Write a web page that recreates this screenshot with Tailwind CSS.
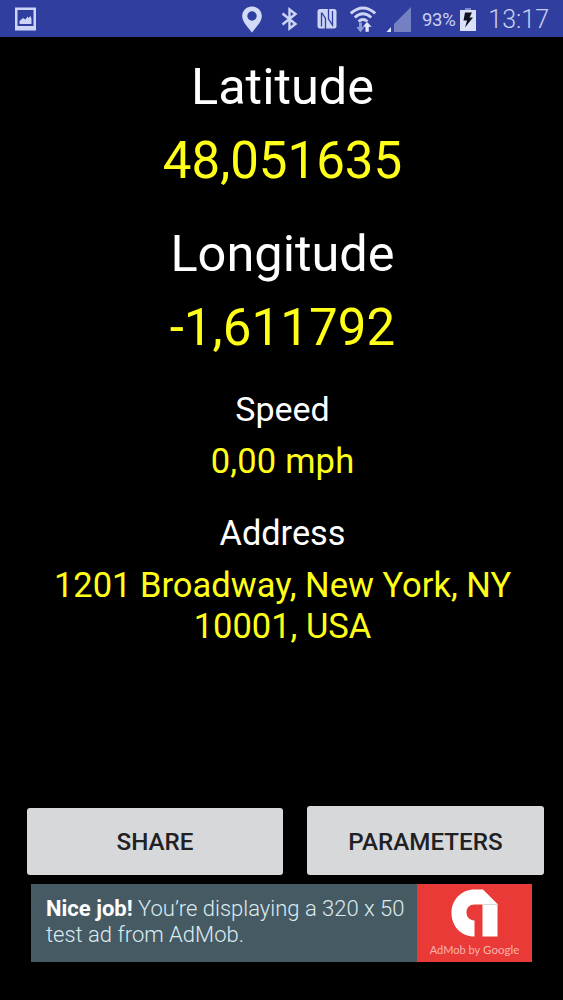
<!DOCTYPE html>
<html lang="en">
<head>
    <meta charset="UTF-8">
    <meta name="viewport" content="width=device-width, initial-scale=1.0">
    <title>GPS Coordinates</title>
    <script src="https://cdn.jsdelivr.net/npm/@tailwindcss/browser@4"></script>
</head>
<body class="bg-black">
    <div class="w-[563px] h-[1000px] flex flex-col overflow-hidden bg-black font-['Roboto',sans-serif]">

        <!-- Status bar -->
        <header class="h-[37px] shrink-0 bg-[#303f9f] flex items-center pl-[15px] pr-[14px] pt-px text-[#c9d0f0]">
            <svg class="w-[21px] h-[24px]" viewBox="0 0 21 24">
                <path fill="#cdd4f8" fill-rule="evenodd" d="M0 0.500H21V23.500H0ZM2.500 3V19H18.500V3Z"/>
                <path fill="#cdd4f8" d="M4.500 17V14L8 11L10.500 12.500L12.500 9.500L13.500 11L15.500 9L16.500 12V17Z"/>
            </svg>
            <svg class="w-[20px] h-[27px] ml-[206px]" viewBox="0 0 20 27">
                <path fill="#d3daf8" fill-rule="evenodd" d="M10 0.500C4.500 0.500 0.200 4.700 0.200 10C0.200 16 6 21 10 26.500C14 21 19.800 16 19.800 10C19.800 4.700 15.500 0.500 10 0.500ZM10 5.300A4.700 4.700 0 1 1 10 14.700A4.700 4.700 0 1 1 10 5.300Z"/>
            </svg>
            <svg class="w-[17px] h-[24px] ml-[19px]" viewBox="0 0 17 24">
                <path fill="none" stroke="#cdd4f6" stroke-width="2.400" d="M1.500 6.500L14.500 17L8.500 21.500V2.500L14.500 7L1.500 17.500"/>
            </svg>
            <svg class="w-[20px] h-[20px] ml-[19px]" viewBox="0 0 20 20">
                <rect width="19" height="19.500" x="0.500" fill="#cdd4f6" rx="2.500"/>
                <path fill="none" stroke="#303f9f" stroke-width="1.300" d="M4.500 17.500V3.500M8.500 20V9.500L5 4M15.500 2V16L11.500 10V0"/>
            </svg>
            <svg class="w-[26px] h-[27px] ml-[13px]" viewBox="0 0 26 27">
                <g fill="none" stroke="#cdd4f6" stroke-width="2.900">
                    <path d="M0.800 7.300Q13 -3.500 25.200 7.300"/>
                    <path d="M4.800 11.500Q13 4.200 21.200 11.500"/>
                    <path d="M8.500 15.500Q13 11.500 17.500 15.500"/>
                </g>
                <path fill="#8f9bd3" d="M9 16.500H12V21H14.500L10.500 26.500L6.500 21H9Z"/>
                <path fill="#e3e8ff" stroke="#303f9f" stroke-width="0.500" d="M17 15.500L22 21H19V26H15.200V21H12.500Z"/>
            </svg>
            <svg class="w-[25px] h-[25px] ml-[10px]" viewBox="0 0 25 25">
                <path fill="#7380c2" d="M25 0V25H8V17Z"/>
                <path fill="#dfe5ff" d="M5 20V25H0.500Z"/>
            </svg>
            <span class="ml-[11px] w-[34px] pt-0.5 text-[18.500px] leading-6 tracking-[-0.3px] whitespace-nowrap">93%</span>
            <svg class="w-[16px] h-[23px] ml-[4px]" viewBox="0 0 16 23">
                <path fill="#7f8bc9" d="M5 0H11V2H5Z"/>
                <path fill="#dce1fa" d="M0 2H16V23H0Z"/>
                <path fill="#10131f" d="M5 4.500H12L9.500 9.500H13L5 19.500L7 12.500H3.500Z"/>
            </svg>
            <span class="ml-auto pt-0.5 text-[25px] leading-8 font-light whitespace-nowrap">13:17</span>
        </header>

        <!-- Position details -->
        <main class="h-[769px] shrink-0 pt-5 pl-[2px] text-center text-white">
            <h1 class="text-[50.500px] leading-[60px]">Latitude</h1>
            <p class="mt-3.5 text-[51px] leading-[60px] text-[#ffff18]">48,051635</p>
            <h1 class="mt-[33px] text-[50.500px] leading-[60px]">Longitude</h1>
            <p class="mt-3.5 text-[51px] leading-[60px] tracking-[0.1px] text-[#ffff18]">-1,611792</p>
            <h2 class="mt-[31px] text-[34px] leading-[41px]">Speed</h2>
            <p class="mt-[11px] text-[34.500px] leading-[41px] tracking-[0.2px] text-[#ffff18]">0,00 mph</p>
            <h2 class="mt-[31px] text-[34.300px] leading-[41px]">Address</h2>
            <p class="mt-[11px] text-[34.500px] leading-[41px] text-[#ffff18]">1201 Broadway, New York, NY<br>10001, USA</p>
        </main>

        <!-- Actions -->
        <div class="h-[69px] shrink-0 flex items-end pl-[27px] gap-6 text-[#202124] text-[24.200px] font-medium">
            <button class="w-[256px] h-[67px] pt-[2px] rounded-[3px] bg-[#d7d8da]">SHARE</button>
            <button class="w-[237px] h-[69px] pt-[3px] rounded-[3px] bg-[#d7d8da]">PARAMETERS</button>
        </div>

        <!-- Ad banner -->
        <div class="mt-[9px] ml-[31px] w-[501px] h-[78px] shrink-0 flex bg-[#465a64]">
            <p class="w-[386px] pl-[15px] pt-[12px] text-[22px] leading-[26px] font-light text-[#dcebf0] whitespace-nowrap"><b class="font-bold text-white">Nice job!</b> You’re displaying a 320 x 50<br>test ad from AdMob.</p>
            <div class="w-[115px] bg-[#e93a37] flex flex-col items-center">
                <svg class="mt-[5px] w-[47px] h-[48px]" viewBox="0 0 47 48">
                    <path fill="#fff" d="M23.500 0.500H32L46.500 15V47.500H31.500V15.500H23.500C18.500 15.500 15.500 19 15.500 23.500C15.500 28 18.500 31 23.500 31.500V47.500C10 47.500 0.500 37 0.500 24C0.500 10.500 10.500 0.500 23.500 0.500Z"/>
                    <path fill="#d9d9d9" d="M31.500 15H46.500V16H31.500Z"/>
                </svg>
                <span class="mt-[5px] flex items-baseline gap-[3px] text-[11px] leading-[15px] text-[#f8b3ac] font-['Lato',sans-serif] whitespace-nowrap">AdMob by <span class="text-[11.500px]">Google</span></span>
            </div>
        </div>
    </div>
</body>
</html>
